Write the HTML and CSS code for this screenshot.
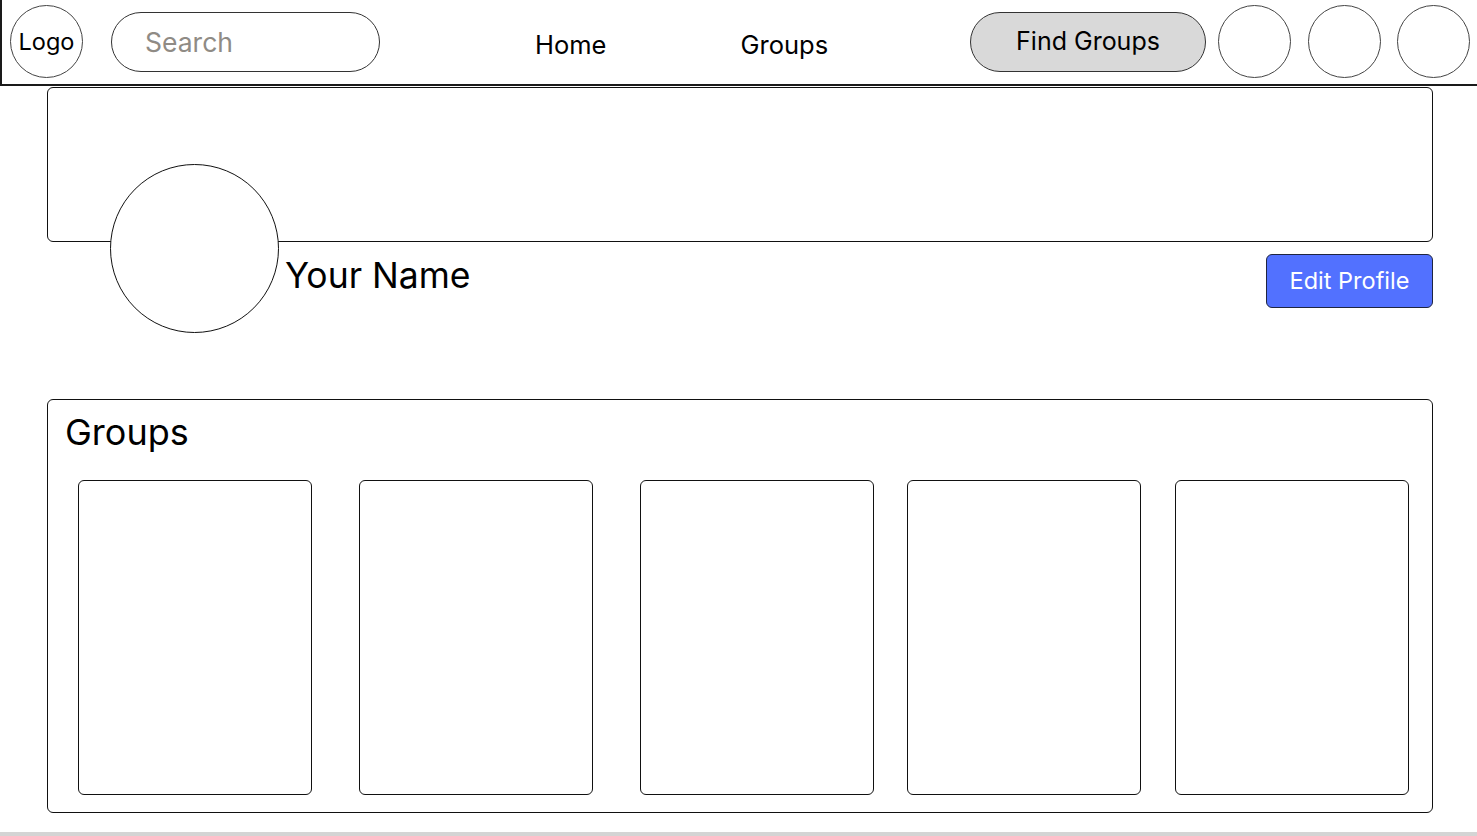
FILE: index.html
```html
<!DOCTYPE html>
<html lang="en">
<head>
<meta charset="utf-8">
<title>Profile</title>
<link rel="stylesheet" href="styles.css">
</head>
<body>
<header class="topbar">
  <div class="logo">Logo</div>
  <div class="search">Search</div>
  <nav class="nav">
    <a class="nav-link nav-home">Home</a>
    <a class="nav-link nav-groups">Groups</a>
  </nav>
  <button class="find">Find Groups</button>
  <div class="icon c1"></div>
  <div class="icon c2"></div>
  <div class="icon c3"></div>
</header>

<main class="page">
  <div class="banner"></div>
  <div class="profile">
    <div class="avatar"></div>
    <div class="name">Your Name</div>
    <button class="edit">Edit Profile</button>
  </div>

  <section class="group-panel">
    <h2 class="group-title">Groups</h2>
    <div class="cards">
      <div class="card"></div>
      <div class="card card-2"></div>
      <div class="card card-3"></div>
      <div class="card card-4"></div>
      <div class="card card-5"></div>
    </div>
  </section>
</main>
<div class="scrollbar"></div>
</body>
</html>
```

FILE: styles.css
```css
* { box-sizing: border-box; }

html, body {
  margin: 0;
  padding: 0;
  background: #ffffff;
  overflow: hidden;
}

body {
  font-family: Inter, Roboto, "Noto Sans", Arial, sans-serif;
  color: #000;
  width: 1477px;
  height: 836px;
}

.topbar {
  height: 86px;
  border-left: 2px solid #1a1a1a;
  border-bottom: 2px solid #1a1a1a;
  display: flex;
  align-items: center;
  padding-left: 8px;
  padding-right: 7px;
}

.logo {
  width: 73px;
  height: 73px;
  border: 1px solid #444;
  border-radius: 50%;
  display: flex;
  align-items: center;
  justify-content: center;
  font-size: 23.5px;
  flex: none;
  margin-top: -1px;
}

.search {
  margin-left: 28px;
  width: 269px;
  height: 60px;
  border: 1px solid #333;
  border-radius: 30px;
  display: flex;
  align-items: center;
  padding-left: 33px;
  font-size: 26.5px;
  color: #8f8b85;
  flex: none;
}

.nav {
  display: flex;
  align-items: center;
  margin-left: 155px;
  padding-top: 5px;
  flex: none;
}

.nav-link {
  font-size: 25.5px;
  color: #000;
  text-decoration: none;
}

.nav-groups { margin-left: 134px; }

.find {
  margin-left: auto;
  width: 236px;
  height: 60px;
  border: 1px solid #333;
  border-radius: 30px;
  background: #d9d9d9;
  font-family: inherit;
  font-size: 25px;
  color: #000;
  padding: 0 0 3px;
  flex: none;
}

.icon {
  width: 73px;
  height: 73px;
  border: 1px solid #444;
  border-radius: 50%;
  flex: none;
  margin-top: -1px;
}

.c1 { margin-left: 12px; }
.c2 { margin-left: 17px; }
.c3 { margin-left: 16px; }

.page {
  padding: 0 44px 0 47px;
}

.banner {
  margin-top: 1px;
  height: 155px;
  border: 1.5px solid #111;
  border-radius: 6px;
}

.profile {
  display: flex;
  align-items: flex-start;
  height: 91px;
}

.avatar {
  width: 169px;
  height: 169px;
  margin-left: 63px;
  margin-top: -78px;
  border: 1.5px solid #111;
  border-radius: 50%;
  background: #fff;
  flex: none;
}

.name {
  margin-left: 6px;
  margin-top: 12px;
  font-size: 35.5px;
  line-height: 44px;
}

.edit {
  margin-left: auto;
  margin-top: 12px;
  width: 167px;
  height: 54px;
  background: #5271ff;
  color: #fff;
  border: 1px solid #1f2540;
  border-radius: 6px;
  font-family: inherit;
  font-size: 23.5px;
  padding: 0 0 2px;
}

.group-panel {
  margin-top: 66px;
  height: 414px;
  border: 1.5px solid #111;
  border-radius: 6px;
  padding: 9px 0 0;
}

.group-title {
  margin: 0;
  padding-left: 17px;
  font-size: 36px;
  font-weight: 400;
  line-height: 46px;
}

.cards {
  display: flex;
  margin-top: 25px;
  padding-left: 30px;
}

.card {
  width: 234px;
  height: 315px;
  border: 1.5px solid #111;
  border-radius: 6px;
  flex: none;
}

.card-2 { margin-left: 47px; }
.card-3 { margin-left: 47px; }
.card-4 { margin-left: 33px; }
.card-5 { margin-left: 34px; }

.scrollbar {
  margin-top: 19px;
  height: 6px;
  background: #d4d4d4;
}
```
